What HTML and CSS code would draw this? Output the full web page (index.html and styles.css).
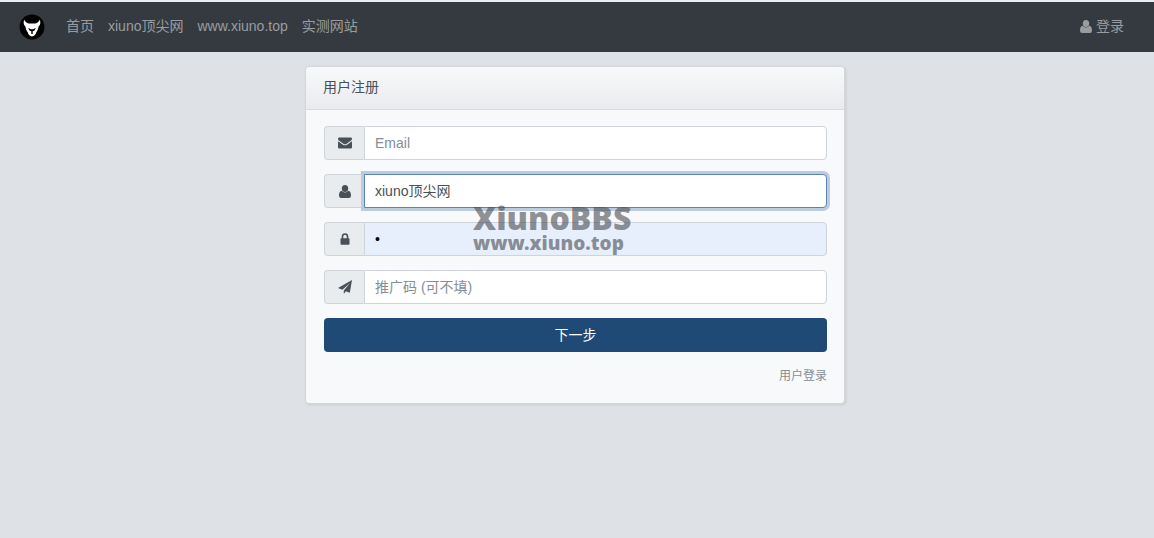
FILE: index.html
```html
<!DOCTYPE html>
<html lang="zh-CN">
<head>
  <meta charset="UTF-8">
  <meta name="viewport" content="width=device-width, initial-scale=1.0">
  <title>用户注册</title>
  <link rel="stylesheet" href="styles.css">
</head>
<body>
  <header class="navbar">
    <a class="logo" href="#" aria-label="Home">
      <svg viewBox="0 0 26 26" width="26" height="26">
        <circle cx="13" cy="13" r="12.5" fill="#000"/>
        <path d="M5.300 5.500C5.800 7.500 7.500 9 9.800 9.600H16.200C18.500 9 20.200 7.500 20.700 5.500C22 8.500 21.300 11 19.600 12.500C19.300 15 18.200 17 17.200 18.500C16.800 20.500 15 22.200 13 22.500C11 22.200 9.200 20.500 8.800 18.500C7.800 17 6.700 15 6.400 12.500C4.700 11 4 8.500 5.300 5.500Z" fill="#fff"/>
        <path d="M9.200 14L12.200 15.300H13.800L16.800 14L15.500 16.600L13.700 17.300V20H12.300V17.300L10.500 16.600Z" fill="#000"/>
      </svg>
    </a>
    <nav class="nav">
      <a href="#">首页</a>
      <a href="#">xiuno顶尖网</a>
      <a href="#">www.xiuno.top</a>
      <a href="#">实测网站</a>
    </nav>
    <a class="login" href="#">
      <svg viewBox="0 0 12 13" width="12" height="13" fill="currentColor"><ellipse cx="6" cy="3.500" rx="3.200" ry="3.500"/><path d="M2.600 5.800Q6 9 9.400 5.800C11.200 6.100 12 8 12 10.400Q12 13 9.900 13H2.100Q0 13 0 10.400C0 8 .8 6.100 2.600 5.800Z"/></svg>
      登录
    </a>
  </header>

  <main class="main">
    <section class="card">
      <h1 class="card-header">用户注册</h1>
      <form class="card-body">
        <div class="input-group">
          <label class="addon" for="email" aria-label="Email">
            <svg viewBox="0 0 14 12" width="14" height="12" fill="currentColor"><path d="M1.200.5H12.800Q14 .5 14 1.700C14 2.700 13.300 3.400 12.500 4L8.600 6.700Q7 7.800 5.400 6.700L1.500 4C.7 3.400 0 2.700 0 1.700Q0 .5 1.200.5ZM0 4.200L5 7.700Q7 9 9 7.700L14 4.200V10.300Q14 11.500 12.800 11.500H1.200Q0 11.500 0 10.300Z"/></svg>
          </label>
          <input class="form-control" type="text" id="email" placeholder="Email">
        </div>
        <div class="input-group">
          <label class="addon" for="username" aria-label="用户名">
            <svg viewBox="0 0 12 13" width="12" height="13" fill="currentColor"><ellipse cx="6" cy="3.500" rx="3.200" ry="3.500"/><path d="M2.600 5.800Q6 9 9.400 5.800C11.200 6.100 12 8 12 10.400Q12 13 9.900 13H2.100Q0 13 0 10.400C0 8 .8 6.100 2.600 5.800Z"/></svg>
          </label>
          <input class="form-control active" type="text" id="username" value="xiuno顶尖网">
        </div>
        <div class="input-group">
          <label class="addon" for="password" aria-label="密码">
            <svg viewBox="0 0 10 12" width="10" height="12"><path d="M2.500 6V3.500A2.500 2.500 0 0 1 7.500 3.500V6" fill="none" stroke="currentColor" stroke-width="1.600"/><rect x=".5" y="5.300" width="9" height="6.400" rx=".8" fill="currentColor"/></svg>
          </label>
          <input class="form-control filled" type="password" id="password" value="1">
        </div>
        <div class="input-group">
          <label class="addon" for="code" aria-label="推广码">
            <svg viewBox="0 0 14 14" width="14" height="14" fill="currentColor"><path d="M14 0L11.800 12.800L7.800 11.200L5.800 14V10.400L12 3L4.400 9.800L0 8Z"/></svg>
          </label>
          <input class="form-control" type="text" id="code" placeholder="推广码 (可不填)">
        </div>
        <button class="btn" type="button">下一步</button>
        <a class="to-login" href="#">用户登录</a>
      </form>
      <div class="watermark">
        <span class="watermark-name">XiunoBBS</span>
        <span class="watermark-url">www.xiuno.top</span>
      </div>
    </section>
  </main>
</body>
</html>
```
FILE: styles.css
```css
* {
  box-sizing: border-box;
}

body {
  margin: 0;
  background: #dee2e6;
  color: #495057;
  font-family: "Liberation Sans", Arial, "Noto Sans CJK SC", sans-serif;
  font-size: 14px;
  line-height: 20px;
}

a {
  text-decoration: none;
}

svg {
  display: block;
}

.navbar {
  display: flex;
  align-items: center;
  height: 52px;
  padding: 0 30px 0 19px;
  border-top: 2px solid #e9edf0;
  background: #343a40;
}

.logo {
  margin-right: 21px;
}

.nav {
  display: flex;
  flex: 1;
  gap: 14px;
  padding-bottom: 2px;
}

.nav a,
.login {
  color: #9a9da0;
}

.login {
  display: flex;
  align-items: center;
  gap: 4px;
  padding-bottom: 2px;
}

.main {
  padding: 14px 18px 14px 14px;
}

.card {
  position: relative;
  max-width: 540px;
  margin: 0 auto;
  border: 1px solid #d3d7db;
  border-radius: 4px;
  background: #f8f9fb;
  box-shadow: 1px 1px 3px rgba(0, 0, 0, 0.1);
}

.card-header {
  margin: 0;
  padding: 10px 17px 12px;
  border-bottom: 1px solid #d7dade;
  border-radius: 4px 4px 0 0;
  background: linear-gradient(#f8f9fa, #e9ebee);
  font-size: 14px;
  font-weight: normal;
}

.card-body {
  display: flex;
  flex-direction: column;
  gap: 14px;
  padding: 16px 17px 17px 18px;
}

.input-group {
  display: flex;
  height: 34px;
}

.addon {
  display: flex;
  align-items: center;
  justify-content: center;
  width: 40px;
  border: 1px solid #ced4da;
  border-right: 0;
  border-radius: 4px 0 0 4px;
  background: #e9ecef;
  color: #495057;
}

.form-control {
  flex: 1;
  min-width: 0;
  padding: 0 10px;
  border: 1px solid #ced4da;
  border-radius: 0 4px 4px 0;
  background: #fff;
  color: #495057;
  font: inherit;
}

.form-control::placeholder {
  color: #868e96;
  opacity: 1;
}

.form-control.active {
  border-color: #5b84b1;
  box-shadow: 0 0 0 3px #bccbdd;
  outline: none;
}

.form-control.filled {
  background: #e8effc;
  color: #000;
}

.btn {
  height: 34px;
  padding: 0 10px;
  border: 0;
  border-radius: 4px;
  background: #1f4a75;
  color: #fff;
  font: inherit;
}

.to-login {
  align-self: flex-end;
  color: #868e96;
  font-size: 12px;
}

/* translucent site mark over the form */
.watermark {
  position: absolute;
  top: 136px;
  left: 167px;
  display: flex;
  flex-direction: column;
  color: rgba(70, 74, 80, 0.6);
  font-family: "Noto Sans", "Open Sans", sans-serif;
  font-weight: 900;
  pointer-events: none;
}

.watermark-name {
  font-size: 32px;
  line-height: 30px;
}

.watermark-url {
  font-size: 19px;
  line-height: 20px;
}
```
